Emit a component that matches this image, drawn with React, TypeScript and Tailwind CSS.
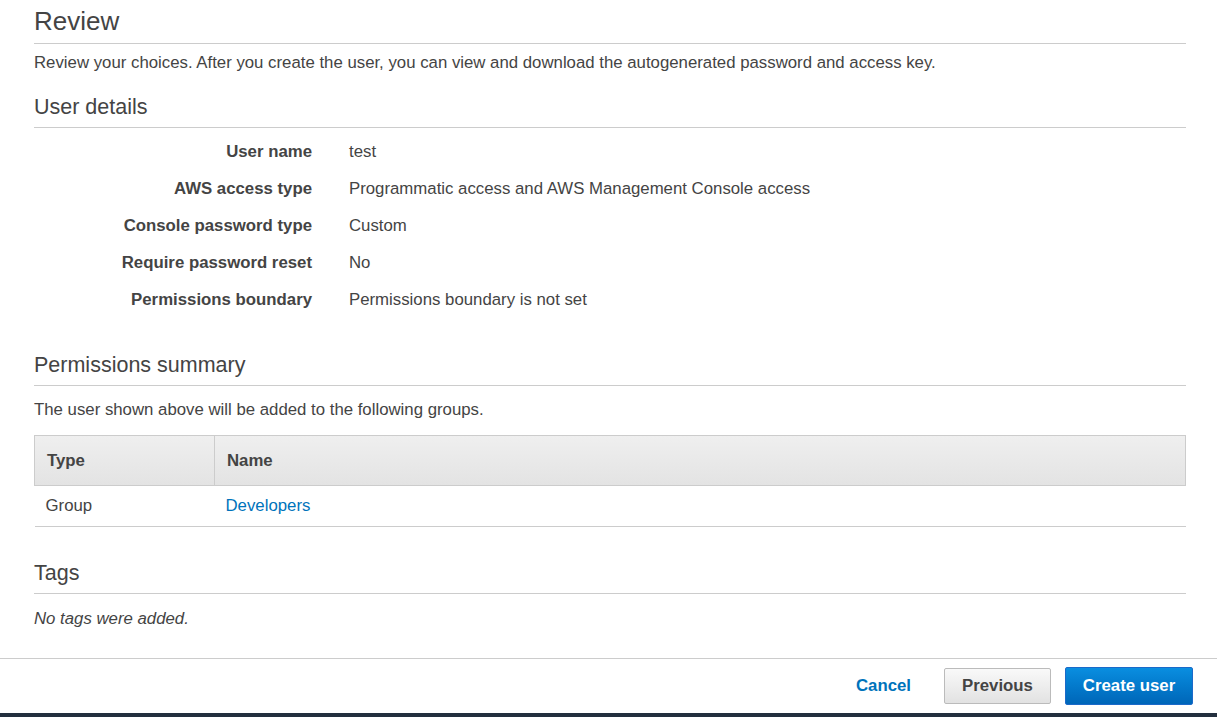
import React from "react";

const details: [string, string][] = [
  ["User name", "test"],
  ["AWS access type", "Programmatic access and AWS Management Console access"],
  ["Console password type", "Custom"],
  ["Require password reset", "No"],
  ["Permissions boundary", "Permissions boundary is not set"],
];

function SectionTitle({ children, className = "" }: { children: React.ReactNode; className?: string }) {
  return (
    <h2 className={"text-[21.5px] leading-[28px] text-[#444] pb-[6px] border-b border-[#ccc] " + className}>
      {children}
    </h2>
  );
}

export default function App() {
  return (
    <div
      className="w-[1217px] h-[717px] bg-white flex flex-col text-[#444] overflow-hidden"
      style={{ fontFamily: '"Liberation Sans", Arial, sans-serif' }}
    >
      <div className="flex-1 px-[34px] pr-[31px]">
        <h1 className="text-[26px] leading-[30px] pt-[6px] pb-[7px] border-b border-[#ccc] text-[#444]">Review</h1>
        <p className="text-[16.8px] leading-[20px] mt-[9px]">
          Review your choices. After you create the user, you can view and download the autogenerated password and
          access key.
        </p>

        <SectionTitle className="mt-[20px]">User details</SectionTitle>
        <div className="mt-[5px]">
          {details.map(([label, value]) => (
            <div key={label} className="flex h-[37px] items-center text-[16.8px]">
              <div className="w-[278px] text-right font-bold">{label}</div>
              <div className="ml-[37px]">{value}</div>
            </div>
          ))}
        </div>

        <SectionTitle className="mt-[33px]">Permissions summary</SectionTitle>
        <p className="text-[16.8px] leading-[20px] mt-[14px]">The user shown above will be added to the following groups.</p>
        <table className="w-full mt-[15px] border-collapse text-[16.8px]">
          <thead>
            <tr className="h-[50px] bg-gradient-to-b from-[#efefef] to-[#e3e3e3]">
              <th className="w-[180px] text-left font-bold px-[12px] border border-[#ccc]">Type</th>
              <th className="text-left font-bold px-[12px] border border-[#ccc]">Name</th>
            </tr>
          </thead>
          <tbody>
            <tr className="h-[41px] border-b border-[#ccc]">
              <td className="px-[11px]">Group</td>
              <td className="px-[11px]">
                <a className="text-[#0073bb]">Developers</a>
              </td>
            </tr>
          </tbody>
        </table>

        <SectionTitle className="mt-[32px]">Tags</SectionTitle>
        <p className="text-[16.8px] leading-[20px] mt-[15px] italic">No tags were added.</p>
      </div>

      <div className="h-[55px] border-t border-[#ccc] flex items-center justify-end pr-[24px] shrink-0">
        <button className="text-[#0073bb] font-bold text-[16.8px] mr-[33px]">Cancel</button>
        <button className="h-[36px] w-[107px] rounded-[2px] border border-[#bbb] bg-gradient-to-b from-[#f9f9f9] to-[#e2e2e2] text-[#444] font-bold text-[16.8px] mr-[14px]">
          Previous
        </button>
        <button className="h-[38px] w-[128px] rounded-[2px] border border-[#1b6ac9] bg-gradient-to-b from-[#0a8ee0] to-[#0066b8] text-white font-bold text-[16.8px]">
          Create user
        </button>
      </div>
      <div className="h-[4px] bg-[#232f3e] shrink-0" />
    </div>
  );
}
